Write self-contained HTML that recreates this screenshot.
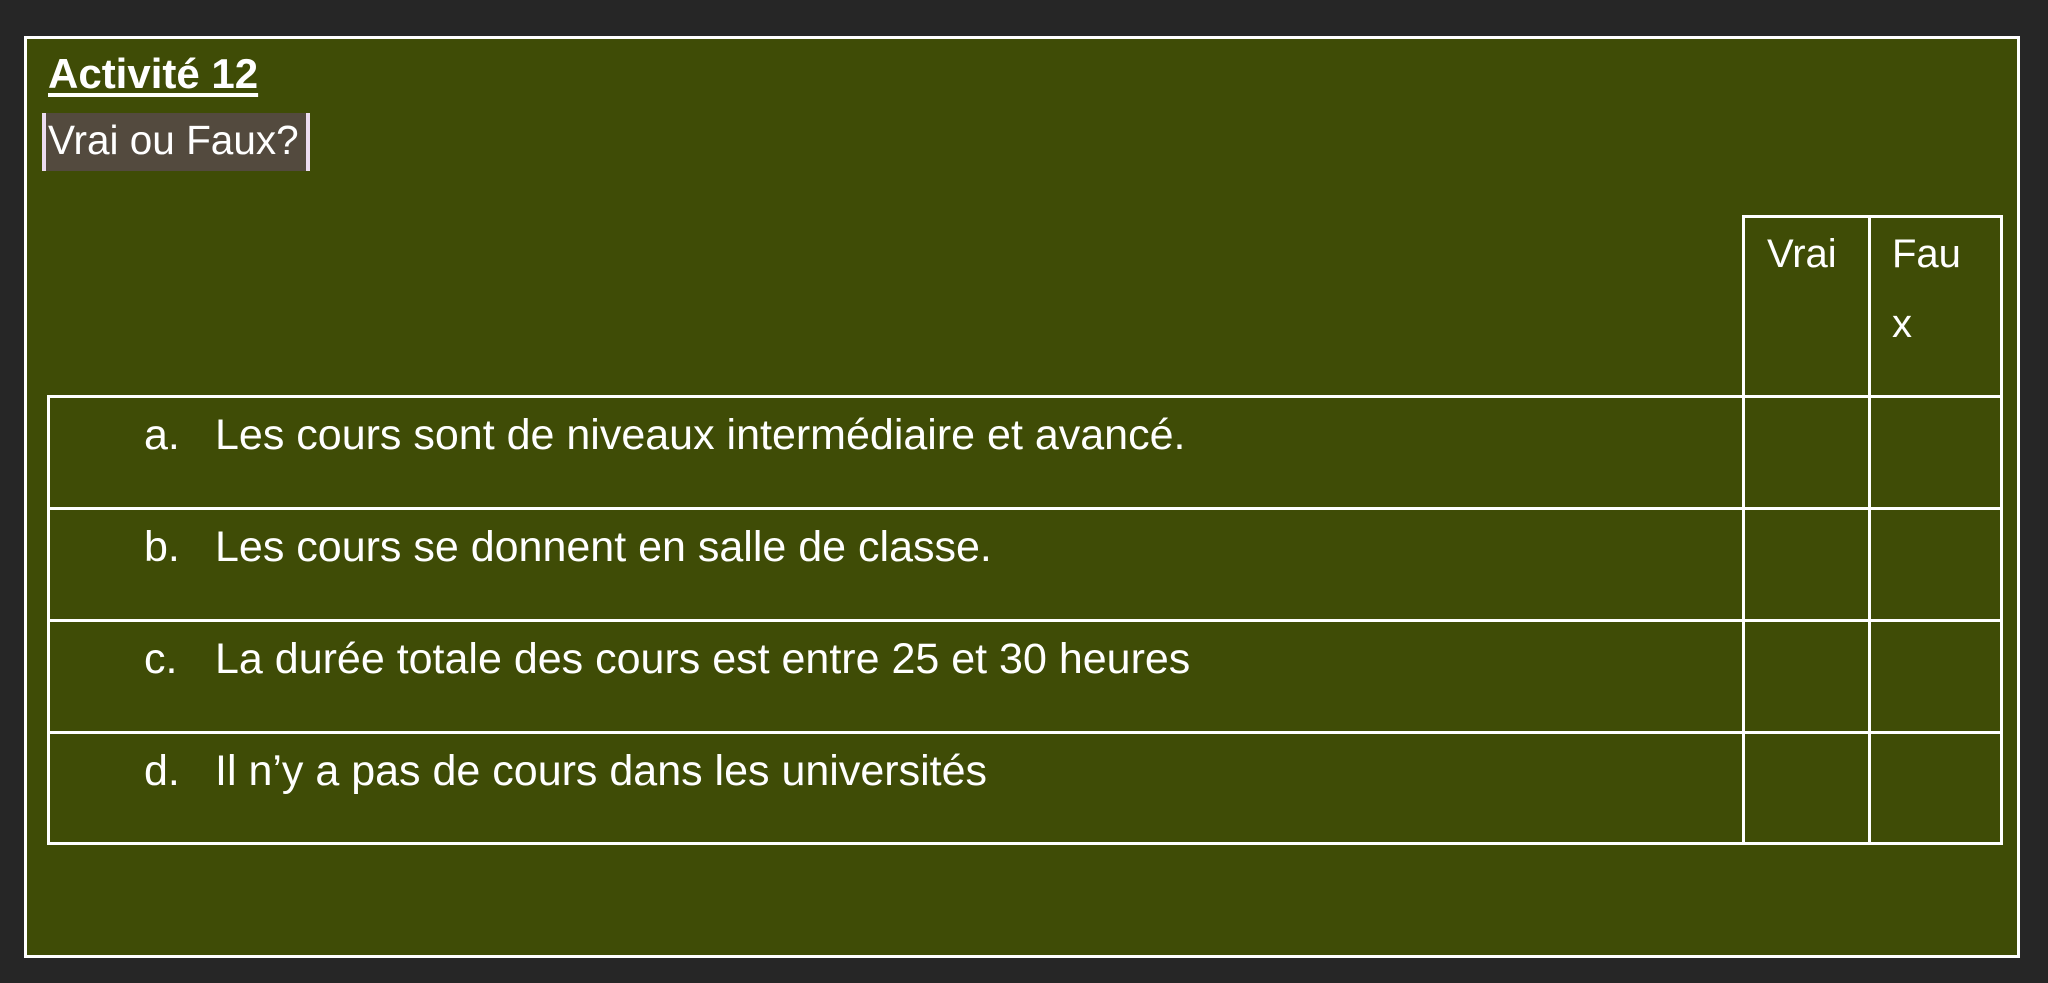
<!DOCTYPE html>
<html><head><meta charset="utf-8"><style>
html,body{margin:0;padding:0;}
body{width:2048px;height:983px;background:#262626;position:relative;overflow:hidden;font-family:"Liberation Sans",sans-serif;color:#fff;}
.box{position:absolute;left:24px;top:36px;width:1996px;height:922px;border:3px solid #fff;background:#3f4c06;box-sizing:border-box;}
.abs{position:absolute;white-space:nowrap;}
.h{left:48px;top:50px;font-size:42px;font-weight:bold;text-decoration:underline;text-underline-offset:5px;}
.hl{position:absolute;left:42px;top:113px;width:268px;height:58px;background:#534a3e;border-left:4px solid #ecdcf0;border-right:4px solid #ecdcf0;box-sizing:border-box;}
.q{left:48px;top:117px;font-size:40.5px;}
.line{position:absolute;background:#fff;}
.t{font-size:43px;}
</style></head><body>
<div class="box"></div>
<div class="abs h">Activité 12</div>
<div class="hl"></div>
<div class="abs q">Vrai ou Faux?</div>

<div class="line" style="left:1742px;top:215px;width:261px;height:3px"></div>
<div class="line" style="left:1742px;top:215px;width:3px;height:629px"></div>
<div class="line" style="left:1868px;top:215px;width:3px;height:629px"></div>
<div class="line" style="left:2000px;top:215px;width:3px;height:629px"></div>
<div class="line" style="left:47px;top:395px;width:3px;height:449px"></div>
<div class="line" style="left:47px;top:395px;width:1956px;height:3px"></div>
<div class="line" style="left:47px;top:507px;width:1956px;height:3px"></div>
<div class="line" style="left:47px;top:619px;width:1956px;height:3px"></div>
<div class="line" style="left:47px;top:731px;width:1956px;height:3px"></div>
<div class="line" style="left:47px;top:842px;width:1956px;height:3px"></div>

<div class="abs t" style="left:1767px;top:232px;font-size:40px">Vrai</div>
<div class="abs t" style="left:1892px;top:232px;font-size:40px">Fau</div>
<div class="abs t" style="left:1892px;top:302px;font-size:40px">x</div>

<div class="abs t" style="left:144px;top:411px">a.</div>
<div class="abs t" style="left:215px;top:411px">Les cours sont de niveaux intermédiaire et avancé.</div>
<div class="abs t" style="left:144px;top:523px">b.</div>
<div class="abs t" style="left:215px;top:523px">Les cours se donnent en salle de classe.</div>
<div class="abs t" style="left:144px;top:635px">c.</div>
<div class="abs t" style="left:215px;top:635px">La durée totale des cours est entre 25 et 30 heures</div>
<div class="abs t" style="left:144px;top:747px">d.</div>
<div class="abs t" style="left:215px;top:747px">Il n’y a pas de cours dans les universités</div>
</body></html>
